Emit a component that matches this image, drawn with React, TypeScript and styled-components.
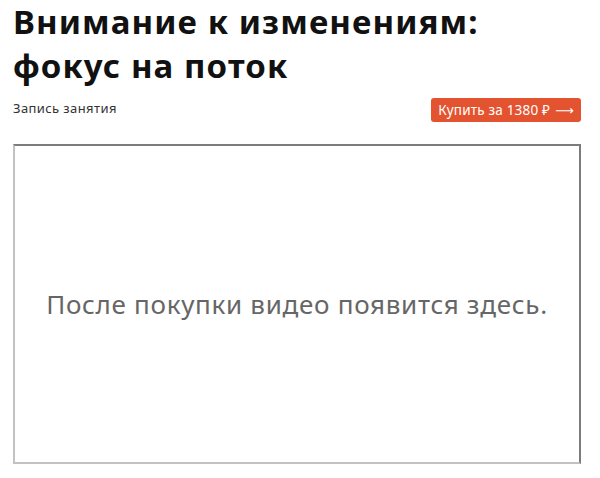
import * as React from "react";
import styled, { createGlobalStyle } from "styled-components";

const GlobalStyle = createGlobalStyle`
  html, body {
    margin: 0;
    padding: 0;
    background: #fff;
  }
  body {
    font-family: "Noto Sans", "Open Sans", sans-serif;
  }
`;

const Page = styled.div`
  width: 568px;
  padding: 0 19px 0 13px;
`;

const Title = styled.h1`
  margin: 0;
  font-size: 33px;
  line-height: 44px;
  font-weight: 700;
  letter-spacing: 1.1px;
  color: #111;
`;

const MetaRow = styled.div`
  display: flex;
  justify-content: space-between;
  align-items: flex-start;
  margin-top: 10px;
`;

const Label = styled.span`
  font-size: 13px;
  letter-spacing: 0.4px;
  color: #333;
  padding-top: 1px;
`;

const BuyButton = styled.button`
  display: flex;
  align-items: center;
  gap: 5px;
  height: 24px;
  padding: 0 7px;
  border: 0;
  border-radius: 3px;
  background: #e4532f;
  color: #fff;
  font-family: inherit;
  font-size: 13.5px;
  letter-spacing: 0.2px;
  cursor: pointer;
`;

const Arrow = styled.span`
  font-family: "DejaVu Sans", sans-serif;
  font-size: 13px;
`;

const Player = styled.div`
  box-sizing: border-box;
  margin-top: 22px;
  height: 320px;
  border: 2px solid;
  border-color: #7c7c7c #7c7c7c #c2c2c2 #c2c2c2;
  display: flex;
  align-items: center;
  justify-content: center;
`;

const Placeholder = styled.p`
  margin: 0;
  font-size: 26px;
  letter-spacing: 0.7px;
  color: #666;
`;

export default function App() {
  return (
    <>
      <GlobalStyle />
      <Page>
        <Title>
          Внимание к изменениям:
          <br />
          фокус на поток
        </Title>
        <MetaRow>
          <Label>Запись занятия</Label>
          <BuyButton>
            Купить за 1380 ₽ <Arrow>⟶</Arrow>
          </BuyButton>
        </MetaRow>
        <Player>
          <Placeholder>После покупки видео появится здесь.</Placeholder>
        </Player>
      </Page>
    </>
  );
}
